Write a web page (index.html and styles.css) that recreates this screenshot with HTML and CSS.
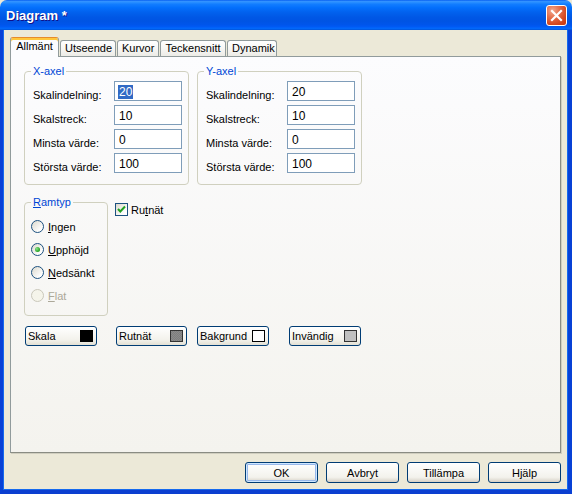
FILE: index.html
```html
<!DOCTYPE html>
<html lang="sv">
<head>
<meta charset="utf-8">
<title>Diagram</title>
<link rel="stylesheet" href="styles.css">
</head>
<body>
<div class="window">
  <div class="titlebar">
    <span class="title">Diagram *</span>
    <button class="close" aria-label="Stäng">
      <svg width="13" height="13" viewBox="0 0 13 13"><path d="M2 2 L11 11 M11 2 L2 11" stroke="#fff" stroke-width="2.2" stroke-linecap="square"/></svg>
    </button>
  </div>
  <div class="frame">
    <div class="tabs">
      <div class="tab active">Allmänt</div>
      <div class="tab">Utseende</div>
      <div class="tab">Kurvor</div>
      <div class="tab">Teckensnitt</div>
      <div class="tab">Dynamik</div>
    </div>
    <div class="panel">
      <div class="row-top">
        <fieldset class="group axis">
          <legend>X-axel</legend>
          <div class="field-row"><span class="lbl">Skalindelning:</span><div class="edit"><span class="sel">20</span></div></div>
          <div class="field-row"><span class="lbl">Skalstreck:</span><div class="edit">10</div></div>
          <div class="field-row"><span class="lbl">Minsta värde:</span><div class="edit">0</div></div>
          <div class="field-row"><span class="lbl">Största värde:</span><div class="edit">100</div></div>
        </fieldset>
        <fieldset class="group axis">
          <legend>Y-axel</legend>
          <div class="field-row"><span class="lbl">Skalindelning:</span><div class="edit">20</div></div>
          <div class="field-row"><span class="lbl">Skalstreck:</span><div class="edit">10</div></div>
          <div class="field-row"><span class="lbl">Minsta värde:</span><div class="edit">0</div></div>
          <div class="field-row"><span class="lbl">Största värde:</span><div class="edit">100</div></div>
        </fieldset>
      </div>
      <div class="row-mid">
        <fieldset class="group frametype">
          <legend><u>R</u>amtyp</legend>
          <div class="radio-row"><span class="radio"></span><span><u>I</u>ngen</span></div>
          <div class="radio-row"><span class="radio checked"></span><span><u>U</u>pphöjd</span></div>
          <div class="radio-row"><span class="radio"></span><span><u>N</u>edsänkt</span></div>
          <div class="radio-row disabled"><span class="radio"></span><span><u>F</u>lat</span></div>
        </fieldset>
        <div class="check-row">
          <span class="check">
            <svg width="11" height="11" viewBox="0 0 11 11"><path d="M2 5 L4.3 7.5 L9 2.5" fill="none" stroke="#21a121" stroke-width="2"/></svg>
          </span>
          <span>Ru<u>t</u>nät</span>
        </div>
      </div>
      <div class="row-colors">
        <button class="cbtn c1">Skala<span class="swatch black"></span></button>
        <button class="cbtn c2">Rutnät<span class="swatch grey"></span></button>
        <button class="cbtn c3">Bakgrund<span class="swatch white"></span></button>
        <button class="cbtn c4">Invändig<span class="swatch silver"></span></button>
      </div>
    </div>
    <div class="buttons">
      <button class="btn default">OK</button>
      <button class="btn">Avbryt</button>
      <button class="btn">Tillämpa</button>
      <button class="btn">Hjälp</button>
    </div>
  </div>
</div>
</body>
</html>
```
FILE: styles.css
```css
html, body {
  margin: 0;
  padding: 0;
  width: 572px;
  height: 494px;
  overflow: hidden;
  background: #ECE9D8;
}
body {
  font-family: "Liberation Sans", Arial, sans-serif;
  font-size: 11px;
  color: #000;
}
.window {
  width: 572px;
  height: 494px;
  display: flex;
  flex-direction: column;
}
.titlebar {
  height: 30px;
  flex: none;
  display: flex;
  align-items: center;
  justify-content: space-between;
  padding: 0 5px 0 6px;
  box-sizing: border-box;
  border-radius: 7px 7px 0 0;
  background: linear-gradient(#0058EE 0%, #3593FF 4%, #288EFF 8%, #127DFF 14%, #036FFC 26%, #0262EE 40%, #0057E5 58%, #0054E3 70%, #0055EB 82%, #005BF5 90%, #026AFE 94%, #0062EF 97%, #0052D6 100%);
}
.title {
  color: #fff;
  font-weight: bold;
  font-size: 13px;
  text-shadow: 1px 1px 0 #0F1089;
  padding-top: 1px;
}
.close {
  width: 21px;
  height: 21px;
  margin: 0;
  padding: 0;
  border: 1px solid #fff;
  border-radius: 3px;
  background: radial-gradient(circle at 30% 25%, #F2A98F 0%, #E5714E 35%, #D4481F 70%, #C3360E 100%);
  display: flex;
  align-items: center;
  justify-content: center;
}
.frame {
  flex: 1;
  display: flex;
  flex-direction: column;
  border-left: 3px solid #0841D6;
  border-right: 4px solid #0841D6;
  border-bottom: 4px solid #0B3ED0;
  box-shadow: inset 1px 0 0 #166AEE, inset -1px 0 0 #166AEE, inset 0 -1px 0 #166AEE;
  padding: 7px 7px 7px 7px;
  box-sizing: border-box;
  min-height: 0;
}
.tabs {
  height: 19px;
  display: flex;
  align-items: flex-end;
  gap: 1px;
  flex: none;
}
.tab {
  height: 16px;
  box-sizing: border-box;
  padding: 0 4px;
  line-height: 15px;
  border: 1px solid #919B9C;
  border-bottom: none;
  border-radius: 3px 3px 0 0;
  background: linear-gradient(#FFFFFF, #F7F7F5 50%, #ECEBE6);
  text-align: center;
}
.tab:nth-child(2) { width: 56px; }
.tab:nth-child(3) { width: 42px; }
.tab:nth-child(4) { width: 66px; }
.tab:nth-child(5) { width: 50px; }
.tab.active {
  width: 49px;
  height: 20px;
  margin-bottom: -1px;
  position: relative;
  z-index: 1;
  background: #FCFCFE;
  border-top: 1px solid #E68B2C;
  box-shadow: inset 0 2px 0 #FFC73C;
  line-height: 17px;
  padding-top: 0;
}
.panel {
  flex: 1;
  border: 1px solid #919B9C;
  border-right-color: #8A8C83;
  border-bottom-color: #8A8C83;
  box-shadow: 1px 1px 0 #D0CEBF;
  background: linear-gradient(#FCFCFE, #F4F3EE);
  padding: 8px 13px 0 13px;
  display: flex;
  flex-direction: column;
  min-height: 0;
}
.row-top {
  display: flex;
  gap: 8px;
}
.group {
  margin: 0;
  border: 1px solid #D0D0BF;
  border-radius: 4px;
  padding: 3px 6px 11px 6px;
  min-width: 0;
}
.group legend {
  padding: 0 2px;
  line-height: 13px;
  color: #0046D5;
}
.axis {
  width: 151px;
}
.field-row {
  display: grid;
  grid-template-columns: 83px 68px;
  height: 20px;
  margin-bottom: 4px;
}
.field-row:last-child { margin-bottom: 0; }
.lbl {
  padding-left: 2px;
  padding-top: 8px;
  line-height: 13px;
  white-space: nowrap;
}
.edit {
  box-sizing: border-box;
  height: 20px;
  border: 1px solid #7F9DB9;
  background: #fff;
  padding: 3px 0 0 4px;
  line-height: 14px;
  font-size: 12px;
}
.sel {
  background: #316AC5;
  color: #fff;
  padding: 0 1px;
  margin-left: -1px;
}
.row-mid {
  display: flex;
  gap: 7px;
  margin-top: 11px;
}
.frametype {
  width: 70px;
  padding: 5px 6px 8px 6px;
}
.frametype legend {
  color: #0046D5;
}
.radio-row {
  height: 23px;
  display: flex;
  align-items: center;
  gap: 4px;
  white-space: nowrap;
}
.radio-row:first-of-type { margin-top: 1px; }
.radio {
  width: 13px;
  height: 13px;
  box-sizing: border-box;
  border: 1px solid #1C5180;
  border-radius: 50%;
  background: linear-gradient(135deg, #DCD9CD, #FFFFFF 80%);
  display: flex;
  align-items: center;
  justify-content: center;
}
.radio.checked::after {
  content: "";
  width: 5px;
  height: 5px;
  border-radius: 50%;
  background: radial-gradient(circle at 35% 35%, #8BE38B, #21A121 70%);
}
.radio-row.disabled { color: #ACA899; }
.radio-row.disabled .radio {
  border-color: #CAC8BB;
  background: #F5F4EA;
}
.check-row {
  display: flex;
  align-items: center;
  gap: 3px;
  margin-top: 7px;
  height: 13px;
  align-self: flex-start;
}
.check {
  width: 13px;
  height: 13px;
  box-sizing: border-box;
  border: 1px solid #1C5180;
  background: linear-gradient(135deg, #DCD9CD, #FFFFFF 80%);
  display: flex;
  align-items: center;
  justify-content: center;
}
.row-colors {
  display: flex;
  margin-top: 10px;
  padding-left: 1px;
}
button {
  font-family: "Liberation Sans", Arial, sans-serif;
  font-size: 11px;
  color: #000;
}
.cbtn {
  height: 20px;
  width: 72px;
  margin: 0;
  box-sizing: border-box;
  border: 1px solid #003C74;
  border-radius: 3px;
  background: linear-gradient(#FFFFFF, #F3F2EC 70%, #E3E0D4);
  display: flex;
  align-items: center;
  justify-content: space-between;
  padding: 0 3px 0 2px;
}
.c2 { margin-left: 19px; width: 71px; }
.c3 { margin-left: 10px; }
.c4 { margin-left: 20px; }
.swatch {
  width: 13px;
  height: 12px;
  box-sizing: border-box;
  border: 1px solid #000;
}
.swatch.black { background: #000; }
.swatch.grey { background: repeating-conic-gradient(#7E7E7E 0 25%, #8C8C8C 0 50%) 0 0 / 2px 2px; border-color: #333; }
.swatch.white { background: #fff; }
.swatch.silver { background: #C0C0C0; border-color: #333; }
.buttons {
  flex: none;
  display: flex;
  justify-content: flex-end;
  gap: 8px;
  margin-top: 9px;
  height: 21px;
  padding-right: 0;
}
.btn {
  width: 73px;
  height: 21px;
  margin: 0;
  box-sizing: border-box;
  border: 1px solid #003C74;
  border-radius: 3px;
  background: linear-gradient(#FFFFFF, #F3F2EC 75%, #D6D0C5);
  padding: 0;
}
.btn.default {
  box-shadow: inset 0 0 0 1px #CEE7FF, inset 0 0 0 2px #98B8EA;
}
```
